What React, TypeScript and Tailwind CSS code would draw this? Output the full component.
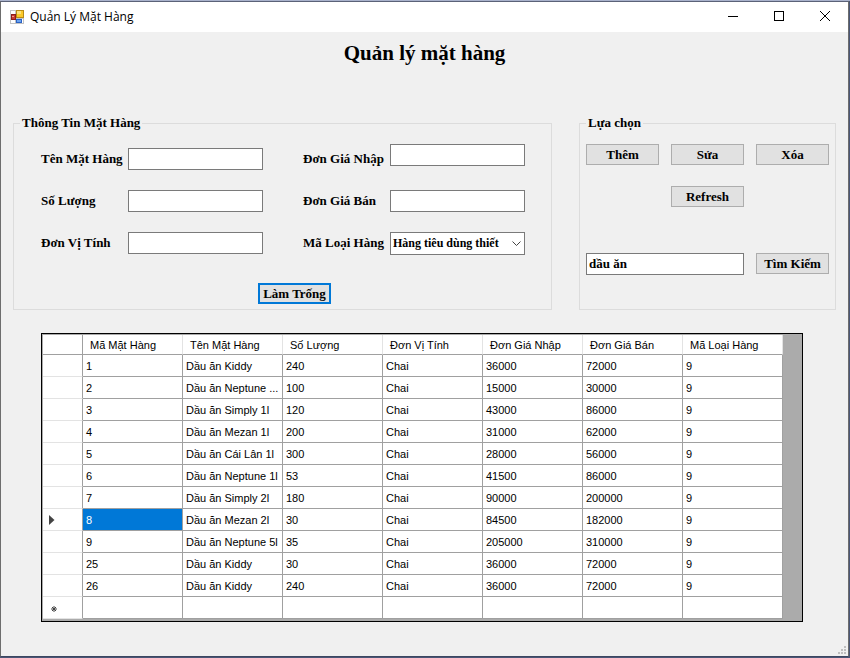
import React from "react";

const serif = "font-['Liberation_Serif','Noto_Sans',serif] text-[13px] leading-4 font-bold text-black";
const boxInput = "w-full min-w-0 h-[22px] border border-[#7a7a7a] bg-white px-1 outline-none";
const pushButton = "h-[21px] border border-[#adadad] bg-[#e1e1e1] text-center whitespace-nowrap";
const captionButton = "flex h-7 w-[46px] items-center justify-center self-start";

const columns = ["Mã Mặt Hàng", "Tên Mặt Hàng", "Số Lượng", "Đơn Vị Tính", "Đơn Giá Nhập", "Đơn Giá Bán", "Mã Loại Hàng"];

const rows = [
  ["1", "Dầu ăn Kiddy", "240", "Chai", "36000", "72000", "9"],
  ["2", "Dầu ăn Neptune ...", "100", "Chai", "15000", "30000", "9"],
  ["3", "Dầu ăn Simply 1l", "120", "Chai", "43000", "86000", "9"],
  ["4", "Dầu ăn Mezan 1l", "200", "Chai", "31000", "62000", "9"],
  ["5", "Dầu ăn Cái Lân 1l", "300", "Chai", "28000", "56000", "9"],
  ["6", "Dầu ăn Neptune 1l", "53", "Chai", "41500", "86000", "9"],
  ["7", "Dầu ăn Simply 2l", "180", "Chai", "90000", "200000", "9"],
  ["8", "Dầu ăn Mezan 2l", "30", "Chai", "84500", "182000", "9"],
  ["9", "Dầu ăn Neptune 5l", "35", "Chai", "205000", "310000", "9"],
  ["25", "Dầu ăn Kiddy", "30", "Chai", "36000", "72000", "9"],
  ["26", "Dầu ăn Kiddy", "240", "Chai", "36000", "72000", "9"],
  ["", "", "", "", "", "", ""],
];

const CURRENT_ROW = 7;

function AppIcon() {
  return (
    <svg width="14" height="14" viewBox="0 0 14 14" shapeRendering="crispEdges" aria-hidden="true">
      <rect width="14" height="14" fill="#c3c3c3" />
      <rect x="1" y="1" width="4" height="3" fill="#fff" />
      <rect x="1" y="10" width="4" height="3" fill="#fff" />
      <rect x="6" y="0" width="8" height="8" fill="#b98a14" />
      <rect x="7" y="1" width="6" height="6" fill="#fbc928" />
      <rect x="7" y="1" width="4" height="3" fill="#fde27a" />
      <rect x="1" y="4" width="5" height="6" fill="#8c1c1c" />
      <rect x="2" y="5" width="3" height="4" fill="#c93a30" />
      <rect x="2" y="6" width="2" height="1" fill="#f29c8c" />
      <rect x="6" y="9" width="6" height="4" fill="#2b62c4" />
      <rect x="7" y="10" width="4" height="2" fill="#6aa2f0" />
      <rect x="12" y="9" width="1" height="4" fill="#fff" />
    </svg>
  );
}

function TitleBar() {
  return (
    <header className="flex h-[30px] items-center bg-white pl-[9px]">
      <AppIcon />
      <h2 className="ml-1.5 flex-1 font-['Open_Sans','Noto_Sans',sans-serif] text-xs leading-4 font-normal text-black">Quản Lý Mặt Hàng</h2>
      <button type="button" aria-label="Minimize" className={captionButton}>
        <svg width="10" height="10" shapeRendering="crispEdges"><rect y="5" width="10" height="1" /></svg>
      </button>
      <button type="button" aria-label="Maximize" className={captionButton}>
        <svg width="10" height="10" shapeRendering="crispEdges" fill="none" stroke="#000"><rect x="0.5" y="0.5" width="9" height="9" /></svg>
      </button>
      <button type="button" aria-label="Close" className={captionButton}>
        <svg width="10" height="10" stroke="#000"><path d="M0 0l10 10M10 0l-10 10" /></svg>
      </button>
    </header>
  );
}

function Field({ id, label, raised = false }: { id: string; label: string; raised?: boolean }) {
  return (
    <div className={raised ? "flex h-[26px] items-start" : "flex h-[22px] items-start"}>
      <label htmlFor={id} className={raised ? "w-[87px] shrink-0 self-end pb-[3px]" : "w-[87px] shrink-0 self-center"}>{label}</label>
      <input id={id} type="text" className={boxInput} />
    </div>
  );
}

function ProductInfo() {
  return (
    <fieldset className="h-[195px] min-w-0 flex-1 border border-[#dcdcdc]">
      <legend className="ml-[6px] px-[2px]">Thông Tin Mặt Hàng</legend>
      <div className="flex items-end gap-10 pt-[13px] pr-[26px] pl-[27px]">
        <div className="flex min-w-0 flex-1 flex-col gap-5">
          <Field id="ten" label="Tên Mặt Hàng" />
          <Field id="soluong" label="Số Lượng" />
          <Field id="donvi" label="Đơn Vị Tính" />
        </div>
        <div className="flex min-w-0 flex-1 flex-col gap-5">
          <Field id="gianhap" label="Đơn Giá Nhập" raised />
          <Field id="giaban" label="Đơn Giá Bán" />
          <div className="flex h-[22px] items-center">
            <label htmlFor="loai" className="w-[87px] shrink-0">Mã Loại Hàng</label>
            <div className="relative min-w-0 flex-1">
              <select id="loai" className="block h-[23px] w-full appearance-none overflow-hidden border border-[#7a7a7a] bg-white pr-4 pl-[2px] text-xs whitespace-nowrap outline-none">
                <option>Hàng tiêu dùng thiết</option>
              </select>
              <svg className="pointer-events-none absolute top-[9px] right-1" width="9" height="6" fill="none" stroke="#444"><path d="M0.5 0.5l4 4l4-4" /></svg>
            </div>
          </div>
        </div>
      </div>
      <div className="mt-[29px] flex justify-center pl-6">
        <button type="button" className="h-[21px] w-[73px] border-2 border-[#0078d7] bg-[#e1e1e1] text-center leading-[17px] whitespace-nowrap">Làm Trống</button>
      </div>
    </fieldset>
  );
}

function Actions() {
  return (
    <fieldset className="h-[195px] w-[257px] min-w-0 shrink-0 border border-[#dcdcdc]">
      <legend className="ml-[6px] px-[2px]">Lựa chọn</legend>
      <div className="grid grid-cols-3 gap-x-3 px-1.5 pt-[13px]">
        <button type="button" className={pushButton}>Thêm</button>
        <button type="button" className={pushButton}>Sửa</button>
        <button type="button" className={pushButton}>Xóa</button>
        <button type="button" className={pushButton + " col-start-2 mt-[21px]"}>Refresh</button>
      </div>
      <div className="mt-[46px] grid grid-cols-3 gap-x-3 px-1.5">
        <input type="text" aria-label="Tìm kiếm mặt hàng" defaultValue="dầu ăn" className="col-span-2 h-[22px] min-w-0 border border-[#7a7a7a] bg-white px-[2px] outline-none" />
        <button type="button" className={pushButton}>Tìm Kiếm</button>
      </div>
    </fieldset>
  );
}

function RowMarker({ index }: { index: number }) {
  if (index === CURRENT_ROW) {
    return <svg className="ml-[6px]" width="6" height="10" fill="#444"><path d="M0 0l5.5 5l-5.5 5z" /></svg>;
  }
  if (index === rows.length - 1) {
    return <svg className="mt-[2px] ml-2" width="6" height="6" stroke="#444"><path d="M3 0v6M0 3h6M1 1l4 4M5 1l-4 4" /></svg>;
  }
  return null;
}

function ProductTable() {
  return (
    <div className="mr-[45px] ml-10 overflow-hidden border border-black bg-[#ababab] pt-px pb-[2px] pl-px">
      <table className="w-[740px] table-fixed border-separate border-spacing-0 bg-white font-['Liberation_Sans','Noto_Sans',sans-serif] text-[11px] leading-[14px] font-normal">
        <colgroup>
          <col className="w-10" />
          <col span={7} />
        </colgroup>
        <thead>
          <tr className="h-5">
            <th className="border-r border-b border-[#a0a0a0] p-0" />
            {columns.map((c) => (
              <th key={c} className="border-r border-b border-r-[#e3e3e3] border-b-[#a0a0a0] p-0 pl-[7px] text-left font-normal whitespace-nowrap">{c}</th>
            ))}
          </tr>
        </thead>
        <tbody>
          {rows.map((row, r) => (
            <tr key={r} className="h-[22px]">
              <th className="border-r border-b border-r-[#a0a0a0] border-b-[#e3e3e3] p-0"><RowMarker index={r} /></th>
              {row.map((cell, c) => (
                <td
                  key={c}
                  className={
                    r === CURRENT_ROW && c === 0
                      ? "border-r border-b border-[#a0a0a0] bg-[#0078d7] p-0 pl-[3px] text-white"
                      : "overflow-hidden border-r border-b border-[#a0a0a0] p-0 pl-[3px] whitespace-nowrap"
                  }
                >
                  {cell}
                </td>
              ))}
            </tr>
          ))}
        </tbody>
      </table>
    </div>
  );
}

function SizeGrip() {
  return (
    <svg className="mr-[2px] ml-auto" width="8" height="8" fill="#bfbfbf" shapeRendering="crispEdges" aria-hidden="true">
      <path d="M6 0h2v2h-2zM3 3h2v2h-2zM6 3h2v2h-2zM0 6h2v2h-2zM3 6h2v2h-2zM6 6h2v2h-2z" />
    </svg>
  );
}

export default function App() {
  return (
    <div className="flex h-screen flex-col bg-[#4a5675]">
      <div className="h-px shrink-0 bg-[#a9b2cc]" />
      <div className={"mr-px flex flex-1 flex-col border border-x-[#6d6d6d] border-t-[#5b6278] border-b-[#3c4660] bg-[#f0f0f0] " + serif}>
        <TitleBar />
        <main className="flex flex-1 flex-col">
          <h1 className="mt-2 text-center text-[21px] leading-[26px] font-bold">Quản lý mặt hàng</h1>
          <div className="mt-[49px] flex gap-[27px] px-3">
            <ProductInfo />
            <Actions />
          </div>
          <div className="mt-[23px]"><ProductTable /></div>
          <div className="mt-auto flex pb-[2px]"><SizeGrip /></div>
        </main>
      </div>
      <div className="h-px shrink-0" />
    </div>
  );
}
